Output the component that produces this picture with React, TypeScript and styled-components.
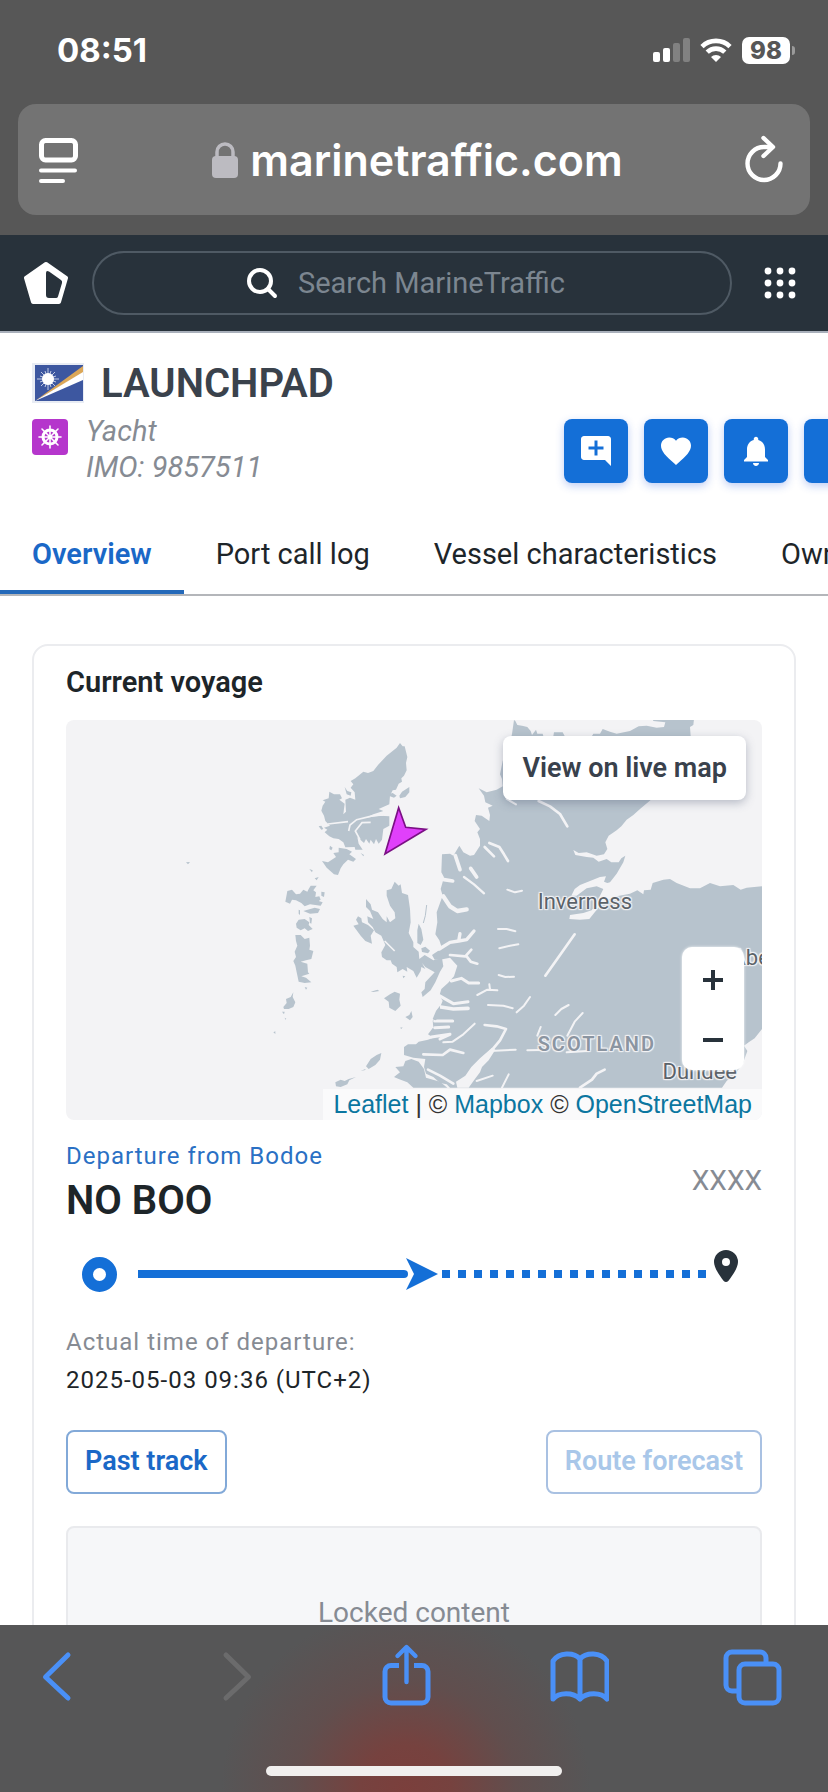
import React from "react";
import styled, { createGlobalStyle } from "styled-components";

const GlobalStyle = createGlobalStyle`
  *, *::before, *::after { box-sizing: border-box; }
  body { margin: 0; background: #fff; font-family: Roboto, "Liberation Sans", sans-serif; color: #1d2529; }
  button, input { font: inherit; color: inherit; }
  button { cursor: pointer; padding: 0; border: 0; background: none; }
  h1, h2, p { margin: 0; }
  a { color: inherit; text-decoration: none; }
  svg { display: block; flex: none; }
`;

const Screen = styled.div`
  display: flex;
  flex-direction: column;
  height: 100vh;
  overflow: hidden;
`;

/* ---------- browser chrome ---------- */

const BrowserTop = styled.header`
  flex: none;
  background: #575757;
  padding: 0 18px 20px;
  color: #fff;
`;

const StatusBar = styled.div`
  display: flex;
  align-items: center;
  justify-content: space-between;
  height: 104px;
  padding: 0 16px 4px 39px;
  font-family: Inter, sans-serif;
`;

const Clock = styled.time`
  font-size: 33px;
  font-weight: 700;
`;

const StatusIcons = styled.div`
  display: flex;
  align-items: center;
  gap: 10px;
`;

const Battery = styled.div`
  position: relative;
  width: 48px;
  height: 27px;
  margin-right: 4px;
  border-radius: 7px;
  background: #fff;
  color: #575757;
  font-size: 24px;
  font-weight: 800;
  line-height: 27px;
  text-align: center;

  &::after {
    content: "";
    position: absolute;
    top: 9px;
    right: -5px;
    width: 3px;
    height: 9px;
    border-radius: 0 3px 3px 0;
    background: #9a9a9a;
  }
`;

const AddressBar = styled.div`
  display: flex;
  align-items: center;
  justify-content: space-between;
  height: 111px;
  padding: 0 25px 0 18px;
  border-radius: 18px;
  background: #737373;
`;

const Address = styled.button`
  display: flex;
  align-items: center;
  gap: 12px;
  margin-left: 10px;
  font-family: Inter, sans-serif;
  font-size: 43px;
  font-weight: 600;
`;

/* ---------- site header ---------- */

const SiteHeader = styled.header`
  flex: none;
  display: flex;
  align-items: center;
  gap: 24px;
  height: 98px;
  padding: 0 32px 0 24px;
  background: #28323b;
  border-bottom: 2px solid #a9b0bb;
  color: #fff;
`;

const SearchBox = styled.label`
  flex: 1;
  min-width: 0;
  display: flex;
  align-items: center;
  justify-content: center;
  gap: 20px;
  height: 64px;
  border: 2px solid #4f5a64;
  border-radius: 32px;
`;

const SearchInput = styled.input`
  width: 280px;
  padding: 0;
  border: 0;
  outline: 0;
  background: transparent;
  font-size: 29px;
  line-height: 36px;
  &::placeholder { color: #7c8690; opacity: 1; }
`;

const MenuButton = styled.button`
  width: 32px;
  margin-left: 8px;
`;

/* ---------- vessel heading ---------- */

const Page = styled.main`
  flex: 1;
  min-height: 0;
  overflow: hidden;
`;

const VesselHeading = styled.section`
  padding: 28px 0 0 32px;
`;

const NameRow = styled.div`
  display: flex;
  align-items: center;
  gap: 17px;
  height: 44px;
`;

const VesselName = styled.h1`
  padding-top: 2px;
  font-size: 40px;
  line-height: 44px;
  font-weight: 600;
  color: #3a424c;
`;

const DetailRow = styled.div`
  display: flex;
  align-items: flex-start;
  justify-content: space-between;
  padding-top: 14px;
`;

const VesselType = styled.div`
  display: flex;
  gap: 18px;
`;

const TypeBadge = styled.span`
  display: grid;
  place-items: center;
  width: 36px;
  height: 36px;
  border-radius: 4px;
  background: #b536cc;
`;

const TypeText = styled.p`
  margin-top: -6px;
  font-size: 29px;
  line-height: 36px;
  font-style: italic;
  color: #868b93;
`;

const Actions = styled.div`
  flex: none;
  display: flex;
  gap: 16px;
  margin-right: -40px;
`;

const ActionButton = styled.button`
  display: grid;
  place-items: center;
  width: 64px;
  height: 64px;
  border-radius: 8px;
  background: #146fd7;
  box-shadow: 0 3px 8px rgba(40, 90, 220, 0.3);
`;

const Tabs = styled.nav`
  display: flex;
  margin-top: 35px;
  border-bottom: 2px solid #b4b6ba;
  overflow: hidden;
`;

const Tab = styled.a<{ $active?: boolean }>`
  flex: none;
  height: 74px;
  padding: 0 32px;
  border-bottom: 4px solid ${(p) => (p.$active ? "#2469b9" : "transparent")};
  font-size: 29px;
  line-height: 68px;
  font-weight: ${(p) => (p.$active ? 600 : 400)};
  color: ${(p) => (p.$active ? "#1a68c7" : "#1d2529")};
`;

/* ---------- voyage card ---------- */

const Card = styled.section`
  margin: 48px 32px 0;
  padding: 16px 32px 32px;
  border: 2px solid #ebecef;
  border-radius: 16px;
`;

const CardTitle = styled.h2`
  font-size: 29px;
  line-height: 40px;
  font-weight: 600;
`;

const MapFrame = styled.div`
  position: relative;
  height: 400px;
  margin-top: 18px;
  overflow: hidden;
  border-radius: 8px;
  background: #f3f3f5;
`;

const MapDrawing = styled.svg`
  width: 100%;
  height: 100%;
`;

const Place = styled.span<{ $right: number; $top: number; $region?: boolean }>`
  position: absolute;
  right: ${(p) => p.$right}px;
  top: ${(p) => p.$top}px;
  font-size: ${(p) => (p.$region ? 20 : 22)}px;
  line-height: 28px;
  font-weight: ${(p) => (p.$region ? 600 : 400)};
  letter-spacing: ${(p) => (p.$region ? 2 : 0)}px;
  color: ${(p) => (p.$region ? "#8b95a1" : "#5b6269")};
  text-shadow: 0 0 2px #f3f3f5, 1px 1px 1px #f3f3f5, -1px -1px 1px #f3f3f5, 1px -1px 1px #f3f3f5, -1px 1px 1px #f3f3f5;
`;

const LiveMapLink = styled.a`
  position: absolute;
  top: 16px;
  right: 16px;
  padding: 0 19px;
  border-radius: 8px;
  background: #fff;
  box-shadow: 0 3px 10px rgba(70, 80, 110, 0.35);
  font-size: 27px;
  line-height: 64px;
  font-weight: 600;
  color: #39414c;
`;

const ZoomControl = styled.div`
  position: absolute;
  right: 18px;
  bottom: 50px;
  width: 62px;
  padding-top: 3px;
  border-radius: 10px;
  background: #fff;
  box-shadow: 0 0 3px rgba(255, 255, 255, 0.9);
`;

const ZoomButton = styled.button`
  display: grid;
  place-items: center;
  width: 100%;
  height: 60px;
`;

const Attribution = styled.div`
  position: absolute;
  right: 0;
  bottom: 0;
  padding: 0 10px;
  background: #fafafb;
  font-family: "Liberation Sans", Arial, sans-serif;
  font-size: 25px;
  line-height: 31px;
  color: #333;
  a { color: #0b76a0; }
`;

const Ports = styled.div`
  display: flex;
  align-items: center;
  justify-content: space-between;
  margin-top: 20px;
`;

const PortName = styled.p<{ $locked?: boolean }>`
  padding-bottom: ${(p) => (p.$locked ? 4 : 0)}px;
  font-size: ${(p) => (p.$locked ? 28 : 40)}px;
  line-height: 48px;
  font-weight: ${(p) => (p.$locked ? 400 : 600)};
  color: ${(p) => (p.$locked ? "#868b93" : "#1d2529")};
`;

const Caption = styled.p<{ $tone?: "blue" | "grey" }>`
  font-size: 24px;
  line-height: 38px;
  letter-spacing: 1px;
  color: ${(p) => (p.$tone === "blue" ? "#2a70c4" : p.$tone === "grey" ? "#868b93" : "#1d2529")};
`;

const PortCaption = styled(Caption)`
  margin-bottom: 5px;
  line-height: 32px;
`;

const Progress = styled.div`
  display: flex;
  align-items: center;
  height: 48px;
  margin-top: 25px;
  padding: 0 24px 0 16px;
`;

const Sailed = styled.div`
  flex: 45;
  height: 8px;
  margin: 0 -2px 0 21px;
  border-radius: 0 4px 4px 0;
  background: #146fd7;
`;

const Remaining = styled.div`
  flex: 44;
  height: 8px;
  margin: 0 8px 0 4px;
  background: repeating-linear-gradient(90deg, #146fd7 0 8px, transparent 8px 16px);
`;

const PinMark = styled.div`
  padding-bottom: 16px;
`;

const Times = styled.div`
  margin-top: 25px;
`;

const TrackButtons = styled.div`
  display: flex;
  justify-content: space-between;
  margin-top: 31px;
`;

const OutlineButton = styled.button`
  height: 64px;
  padding: 0 17px 2px;
  border: 2px solid #82a9d8;
  border-radius: 8px;
  font-size: 27px;
  font-weight: 600;
  color: #1a68c7;
  &:disabled { border-color: #a9c1e2; color: #a9c7e9; }
`;

const LockedBox = styled.div`
  margin-top: 32px;
  padding: 65px 0;
  border: 2px solid #e9eaed;
  border-radius: 8px;
  background: #f6f7f9;
  text-align: center;
  font-size: 28px;
  line-height: 40px;
  color: #868b93;
`;

/* ---------- bottom toolbar ---------- */

const BrowserBottom = styled.footer`
  flex: none;
  height: 167px;
  background: radial-gradient(circle 185px at 49% 100%, #7b3f3c 0, #76423f 25%, rgba(100, 76, 75, 0.75) 60%, rgba(86, 86, 87, 0) 100%), #565657;
`;

const Toolbar = styled.nav`
  display: flex;
  justify-content: space-between;
  padding: 18px 45px 0 27px;
`;

const HomeBar = styled.div`
  width: 296px;
  height: 10px;
  margin: 59px auto 0;
  border-radius: 5px;
  background: #f1efee;
`;

const ToolIcon = ({ color = "#4a90f7", children }: { color?: string; children: React.ReactNode }) => (
  <svg width="60" height="64" viewBox="0 0 60 64" fill="none" stroke={color} strokeWidth="5" strokeLinecap="round" strokeLinejoin="round">
    {children}
  </svg>
);

/* ---------- drawings ---------- */

const LAND = "#b7c3cd";
const SEA = "#f3f3f5";

const Flag = () => (
  <svg width="52" height="40" viewBox="0 0 52 40">
    <rect width="52" height="40" fill="#e8ecf4" />
    <rect x="3" y="2" width="48" height="36" fill="#3d57a0" />
    <path d="M3 38 51 3v7z" fill="#dba758" />
    <path d="M3 38 51 9v8z" fill="#fff" />
    <g stroke="#fff" strokeWidth=".7">
      <path d="M16 5v22M5 16h22M9 9l14 14M23 9 9 23M13 8l6 16M19 8l-6 16M8 13l16 6M8 19l16-6" />
    </g>
    <circle cx="16" cy="16" r="6" fill="#fff" />
  </svg>
);

const Wheel = () => (
  <svg width="24" height="24" viewBox="0 0 24 24" fill="none" stroke="#fff">
    <circle cx="12" cy="12" r="7" strokeWidth="3" />
    <path d="M12 1v22M1 12h22M4 4l16 16M20 4 4 20" strokeWidth="1.6" strokeLinecap="round" />
    <circle cx="12" cy="12" r="2" fill="#fff" stroke="none" />
  </svg>
);

const VoyageMap = () => (
  <MapDrawing viewBox="0 0 2088 1200" preserveAspectRatio="xMaxYMin slice" role="img" aria-label="Map of Scotland with the vessel position">
    <g transform="translate(1002 -63)">
      <path
        fill={LAND}
        d="M342 63 346 66 352 78 366 80 382 84 392 96 396 108 408 92 412 104 428 104 430 111 460 111 462 100 488 100 494 111 576 111 580 104 600 104 608 90 630 98 650 104 690 96 716 82 740 80 770 86 792 84 796 70 760 66 758 60 882 60 880 78 870 84 872 111 840 180 752 303 720 330 700 348 680 362 664 382 650 394 626 410 616 430 622 450 612 466 590 470 560 460 536 462 520 453 526 468 560 474 580 476 596 488 620 480 634 490 656 490 664 478 676 470 670 490 650 524 630 550 622 552 612 548 618 532 600 534 570 546 540 558 524 570 514 590 530 590 560 568 590 562 610 570 600 590 590 612 575 634 550 642 510 648 508 660 540 662 568 660 580 645 600 620 620 604 650 592 690 584 712 574 730 586 732 574 752 572 758 552 790 542 810 540 830 552 870 568 900 568 930 552 960 562 1000 558 1022 572 1040 566 1086 562 1086 990 1064 1018 1046 1030 1032 1040 1042 1056 1030 1090 1010 1120 980 1146 966 1166 150 1166 140 1156 120 1152 100 1134 78 1124 72 1104 76 1080 40 1076 12 1068 12 1044 24 1036 48 1036 56 1028 84 1022 100 1016 84 1006 100 985 98 965 106 955 110 935 122 920 128 905 118 890 124 870 144 852 162 832 172 800 150 776 120 782 104 782 96 768 126 748 118 724 106 706 112 670 110 640 120 612 128 590 122 570 132 535 124 520 126 466 150 464 160 470 178 440 190 460 210 470 222 468 240 440 240 420 232 400 240 390 224 366 228 348 245 350 268 366 270 348 264 326 278 320 256 310 252 290 236 268 260 280 290 272 308 262 306 240 300 226 308 186 330 130 336 105z"
      />
      <g fill="none" stroke={SEA} strokeLinecap="round" strokeLinejoin="round" strokeWidth="6">
        <path d="M416 306 450 322 480 345 502 382" strokeWidth="8" />
        <path d="M320 300 348 316" />
        <path d="M254 444 282 472M268 432 298 444 312 466 324 486" strokeWidth="8" />
        <path d="M166 470 180 512M212 508 230 534M132 542 158 546" strokeWidth="11" />
        <path d="M192 534 222 556 252 583" strokeWidth="7" />
        <path d="M322 572 345 580 366 575M294 690 320 690 346 697M298 748 330 740 355 736M296 828 316 834 342 833" />
        <path d="M130 592 150 622 172 636 200 631" strokeWidth="13" />
        <path d="M118 750 150 730 176 726 180 704M176 726 200 722 222 696" strokeWidth="10" />
        <path d="M150 768 196 772 214 752M200 772 212 788 232 794" strokeWidth="8" />
        <path d="M154 846 184 838 206 852 236 852M118 890 160 914 204 908" strokeWidth="9" />
        <path d="M122 924 160 930 204 928" strokeWidth="11" />
        <path d="M104 966 158 966M104 986 146 984M94 1014 150 1006 120 1020" strokeWidth="9" />
        <path d="M232 888 262 872 292 874M268 856 270 872M264 918 310 920 338 928" />
        <path d="M350 940 372 920 390 894M466 948 484 930 506 918M502 1010 524 968 548 942M412 1010 422 984" />
        <path d="M436 830 470 782 524 706" strokeWidth="8" />
        <path d="M130 1030 158 1028 190 1006 224 974" />
        <path d="M254 978 290 982 318 990 300 1024 270 1060" strokeWidth="8" />
        <path d="M270 1056 347 1052M382 1054 424 1053M500 1060 562 1056M230 1146 278 1130M306 1166 326 1126" />
        <path d="M540 1166 576 1142 590 1124 614 1112" strokeWidth="8" />
        <path d="M70 1066 128 1068 150 1052 190 1062M84 1112 120 1130 160 1154" strokeWidth="8" />
      </g>
      <path d="M276 1046 240 1078 214 1104 196 1130 168 1148 172 1166 206 1166 222 1144 240 1120 246 1104 266 1084 286 1052z" fill={SEA} />
    </g>
    <g fill={LAND} transform="translate(-198 -273)">
      <path d="M1200 342 1208 352 1214 352 1222 384 1218 402 1220 424 1212 440 1204 448 1206 458 1196 464 1188 482 1178 484 1170 500 1168 526 1136 540 1150 546 1120 556 1098 566 1140 560 1168 562 1168 590 1150 600 1146 632 1136 644 1128 630 1122 646 1112 632 1108 644 1098 630 1092 642 1072 624 1076 644 1088 662 1066 662 1064 654 1036 655 1030 640 1016 630 1000 628 988 622 974 610 982 602 972 596 990 590 976 576 972 560 964 545 968 530 976 518 968 514 986 508 988 488 1002 496 1020 496 1026 508 1018 512 1034 524 1030 556 1038 548 1036 512 1050 506 1066 512 1064 490 1052 476 1060 466 1052 456 1066 448 1090 428 1104 432 1120 426 1134 408 1160 380 1190 356z" />
      <path d="M966 696 984 700 1008 684 1000 672 1016 670 1016 656 1040 660 1056 668 1048 676 1068 690 1060 698 1044 692 1030 706 1022 718 1014 738 1002 736 980 716zM1198 500 1206 488 1228 474 1228 490 1216 504 1200 508zM1170 494l8-2 12 8-8 6-12-4zM956 592l8-2 6 10-6 2zM990 650l8 6-4 8-6-4zM1034 474l8 12 12 4-2 10-12-4zM1082 672l10 6-2 4zM928 720l10 4-2 6zM944 748l12-4-6 10zM558 700l12-1-6 7z" />
      <path d="M856 818 862 786 876 782 888 796 900 794 910 782 922 788 926 780 932 770 950 770 940 784 948 790 946 804 958 802 962 812 956 816 968 820 962 830 930 826 914 832 904 822 888 814 876 812 870 824zM910 846 944 836 960 840 954 852 930 854zM964 788l10 2-2 14-8-4zM888 884 896 872 914 870 928 880 926 888 938 900 924 906 914 898 902 904 890 896zM928 864l8 4-2 16-4-2zM896 842l4 2 0 14-4-4z" />
      <path d="M886 918 902 918 914 930 928 926 930 950 928 962 940 966 934 990 918 994 902 998 922 1004 924 1030 928 1034 904 1042 918 1046 934 1060 914 1062 896 1058 890 1030 886 1010 880 996 888 984 884 968 892 950 888 936zM850 1134 860 1122 858 1110 872 1104 880 1090 878 1104 886 1120 880 1134 866 1140 852 1140zM914 1074l8 2-4 6zM846 1148l8 0-2 8zM820 1210l6-3 0 8zM854 1166l5 3-3 3z" />
      <path d="M1184 758 1196 770 1202 766 1206 792 1224 798 1230 840 1232 880 1226 912 1240 940 1240 954 1256 968 1258 990 1274 978 1300 994 1326 988 1330 1012 1320 1028 1306 1060 1292 1084 1268 1104 1264 1090 1274 1080 1276 1060 1304 1030 1276 1014 1266 1002 1276 1020 1264 1014 1262 1026 1250 1046 1240 1026 1220 1014 1222 1028 1208 1020 1192 1030 1190 1014 1176 1004 1172 994 1160 994 1146 984 1144 970 1156 948 1144 920 1126 910 1118 894 1104 880 1102 862 1120 870 1110 846 1098 834 1098 810 1112 826 1116 842 1134 850 1148 870 1160 880 1160 862 1170 880 1186 868 1184 850 1170 830 1160 800 1160 784 1174 780z" />
      <path d="M1060 890 1076 886 1068 872 1074 862 1084 868 1086 880 1104 888 1122 904 1112 920 1116 944 1096 936 1082 920zM1256 884 1264 900 1270 932 1262 948 1252 942 1252 904zM1264 958l12-5 14 12-6 8-18-4zM1152 1108 1170 1096 1184 1088 1200 1094 1198 1112 1202 1130 1186 1146 1168 1136 1166 1118zM1216 1164 1228 1158 1234 1146 1238 1164 1230 1174zM1208 1040l8 2-6 6zM1200 1196l8-1-4 5zM1112 1086l8 0 12-4 6 4-18 3zM1298 1170 1308 1146 1320 1130 1320 1164 1306 1174z" />
      <path d="M1144 1272 1140 1292 1126 1308 1106 1320 1098 1312 1112 1290 1130 1278zM1006 1360 1022 1352 1034 1356 1046 1350 1068 1344 1048 1354 1042 1366 1022 1374 1008 1372zM1082 1326l14-6 0 3zM1186 1314 1210 1312 1216 1296 1234 1290 1256 1298 1272 1320 1278 1346 1320 1358 1342 1376 1240 1376 1222 1360 1196 1350 1182 1344 1200 1330z" />
      <path d="M1280 828 1276 860 1270 882" fill="none" stroke={LAND} strokeWidth="3" />
      <path d="M984 585 1044 578M1046 606 1050 588 1070 572 1120 560 1150 558M1112 580 1086 581 1066 606 1080 632M1154 936 1184 966" fill="none" stroke={SEA} strokeWidth="5" />
      <path d="M1196 536 1217 595 1278 601 1155 675z" fill="#e040fb" stroke="#7b1085" strokeWidth="5" />
    </g>
  </MapDrawing>
);

export default function App() {
  return (
    <Screen>
      <GlobalStyle />
      <BrowserTop>
        <StatusBar>
          <Clock>08:51</Clock>
          <StatusIcons>
            <svg width="37" height="24" viewBox="0 0 37 24" fill="#fff">
              <rect y="14" width="7" height="10" rx="2" />
              <rect x="10" y="10" width="7" height="14" rx="2" />
              <rect x="20" y="5" width="7" height="19" rx="2" opacity=".25" />
              <rect x="30" width="7" height="24" rx="2" opacity=".25" />
            </svg>
            <svg width="32" height="24" viewBox="0 0 32 24" fill="none" stroke="#fff" strokeWidth="4.6">
              <path d="M2 8.6a20 20 0 0 1 28 0" />
              <path d="M7.2 14.2a12.6 12.6 0 0 1 17.6 0" />
              <path d="M16 24l-5-5a7 7 0 0 1 10 0z" fill="#fff" stroke="none" />
            </svg>
            <Battery>98</Battery>
          </StatusIcons>
        </StatusBar>
        <AddressBar>
          <button aria-label="Page settings">
            <svg width="46" height="46" viewBox="0 -1 46 46" fill="none" stroke="#fff" strokeLinecap="round">
              <rect x="5.5" y="2.5" width="34" height="19.5" rx="4" strokeWidth="5" />
              <path d="M5 32.500h34M5 43h22" strokeWidth="4" />
            </svg>
          </button>
          <Address>
            <svg width="26" height="36" viewBox="0 0 26 36">
              <path d="M5 16V10a8 8 0 0 1 16 0v6" fill="none" stroke="#bcbbc1" strokeWidth="3.5" />
              <rect y="14" width="26" height="22" rx="4" fill="#bcbbc1" />
            </svg>
            marinetraffic.com
          </Address>
          <button aria-label="Reload">
            <svg width="42" height="50" viewBox="0 0 42 50" fill="none" stroke="#fff" strokeWidth="4.4" strokeLinecap="round" strokeLinejoin="round">
              <path d="M37.500 28.500A16.500 16.500 0 1 1 21 12H28" />
              <path d="M20.500 3 30 12 20.500 21" />
            </svg>
          </button>
        </AddressBar>
      </BrowserTop>

      <SiteHeader>
        <a href="#home" aria-label="Home">
          <svg width="44" height="44" viewBox="0 0 44 44">
            <path d="M22 3 42 17 35 41H9L2 17z" fill="#fff" stroke="#fff" strokeWidth="4" strokeLinejoin="round" />
            <path d="M22 12q0-3 3-1.500L37 19q1.500 1 1 3L34 35.500q-.5 1.500-2 1.500h-7q-3 0-3-3z" fill="#28323b" />
          </svg>
        </a>
        <SearchBox>
          <svg width="32" height="32" viewBox="0 0 32 32" fill="none" stroke="#fff" strokeWidth="4" strokeLinecap="round">
            <circle cx="14" cy="14" r="11" />
            <path d="M22 22 29 29" />
          </svg>
          <SearchInput type="text" placeholder="Search MarineTraffic" aria-label="Search MarineTraffic" />
        </SearchBox>
        <MenuButton aria-label="Apps">
          <svg width="32" height="32" viewBox="0 0 32 32" fill="#fff">
            {[4, 16, 28].map((y) => [4, 16, 28].map((x) => <circle key={`${x}-${y}`} cx={x} cy={y} r="3.4" />))}
          </svg>
        </MenuButton>
      </SiteHeader>

      <Page>
        <VesselHeading>
          <NameRow>
            <Flag />
            <VesselName>LAUNCHPAD</VesselName>
          </NameRow>
          <DetailRow>
            <VesselType>
              <TypeBadge>
                <Wheel />
              </TypeBadge>
              <TypeText>
                Yacht
                <br />
                IMO: 9857511
              </TypeText>
            </VesselType>
            <Actions>
              <ActionButton aria-label="Add note">
                <svg width="36" height="36" viewBox="0 0 24 24" fill="#fff">
                  <path d="M22 4c0-1.100-.9-2-2-2H4c-1.100 0-2 .9-2 2v12c0 1.100.9 2 2 2h14l4 4zm-5 7h-4v4h-2v-4H7V9h4V5h2v4h4z" />
                </svg>
              </ActionButton>
              <ActionButton aria-label="Add to favourites">
                <svg width="36" height="36" viewBox="0 0 24 24" fill="#fff">
                  <path d="m12 21.350-1.450-1.320C5.400 15.360 2 12.280 2 8.500 2 5.420 4.420 3 7.500 3c1.740 0 3.410.81 4.500 2.090C13.090 3.810 14.760 3 16.500 3 19.580 3 22 5.420 22 8.500c0 3.780-3.400 6.860-8.550 11.540z" />
                </svg>
              </ActionButton>
              <ActionButton aria-label="Notifications">
                <svg width="36" height="36" viewBox="0 0 24 24" fill="#fff">
                  <path d="M12 22c1.100 0 2-.9 2-2h-4c0 1.100.89 2 2 2m6-6v-5c0-3.070-1.640-5.640-4.500-6.320V4c0-.83-.67-1.500-1.500-1.500s-1.500.67-1.500 1.500v.68C7.630 5.360 6 7.920 6 11v5l-2 2v1h16v-1z" />
                </svg>
              </ActionButton>
              <ActionButton aria-label="More actions" />
            </Actions>
          </DetailRow>
        </VesselHeading>

        <Tabs>
          <Tab href="#overview" $active>Overview</Tab>
          <Tab href="#ports">Port call log</Tab>
          <Tab href="#vessel">Vessel characteristics</Tab>
          <Tab href="#ownership">Ownership</Tab>
        </Tabs>

        <Card>
          <CardTitle>Current voyage</CardTitle>
          <MapFrame>
            <VoyageMap />
            <Place $right={130} $top={168}>Inverness</Place>
            <Place $right={-63} $top={224}>Aberdeen</Place>
            <Place $right={106} $top={310} $region>SCOTLAND</Place>
            <Place $right={25} $top={338}>Dundee</Place>
            <LiveMapLink href="#map">View on live map</LiveMapLink>
            <ZoomControl>
              <ZoomButton aria-label="Zoom in">
                <svg width="20" height="20" viewBox="0 0 20 20" fill="#28323b"><path d="M8 0h4v8h8v4h-8v8H8v-8H0V8h8z" /></svg>
              </ZoomButton>
              <ZoomButton aria-label="Zoom out">
                <svg width="20" height="20" viewBox="0 0 20 20" fill="#28323b"><path d="M0 8h20v4H0z" /></svg>
              </ZoomButton>
            </ZoomControl>
            <Attribution>
              <a href="#leaflet">Leaflet</a> | © <a href="#mapbox">Mapbox</a> © <a href="#osm">OpenStreetMap</a>
            </Attribution>
          </MapFrame>

          <Ports>
            <div>
              <PortCaption $tone="blue">Departure from Bodoe</PortCaption>
              <PortName>NO BOO</PortName>
            </div>
            <PortName $locked>XXXX</PortName>
          </Ports>

          <Progress>
            <svg width="35" height="35" viewBox="0 0 35 35" fill="none" stroke="#146fd7" strokeWidth="11">
              <circle cx="17.5" cy="17.5" r="12" />
            </svg>
            <Sailed />
            <svg width="32" height="32" viewBox="0 0 32 32" fill="#146fd7"><path d="M0 0 32 16 0 32 8 16z" /></svg>
            <Remaining />
            <PinMark>
              <svg width="24" height="32" viewBox="0 0 24 32" fill="#28323b">
                <path fillRule="evenodd" d="M12 0a12 12 0 0 1 12 12c0 6-6 14-9.500 18.800q-2.500 2.400-5 0C6 26 0 18 0 12A12 12 0 0 1 12 0m0 8a4 4 0 1 0 0 8 4 4 0 0 0 0-8" />
              </svg>
            </PinMark>
          </Progress>

          <Times>
            <Caption $tone="grey">Actual time of departure:</Caption>
            <Caption>2025-05-03 09:36 (UTC+2)</Caption>
          </Times>

          <TrackButtons>
            <OutlineButton>Past track</OutlineButton>
            <OutlineButton disabled>Route forecast</OutlineButton>
          </TrackButtons>

          <LockedBox>Locked content</LockedBox>
        </Card>
      </Page>

      <BrowserBottom>
        <Toolbar>
          <button aria-label="Back">
            <ToolIcon><path d="M41 12 18.500 34 41 55" /></ToolIcon>
          </button>
          <button aria-label="Forward" disabled>
            <ToolIcon color="#6b6b6c"><path d="M25 12 47.500 34 25 55" /></ToolIcon>
          </button>
          <button aria-label="Share">
            <ToolIcon>
              <path d="M24 22.500h-8a6 6 0 0 0-6 6V54a6 6 0 0 0 6 6h31a6 6 0 0 0 6-6V28.500a6 6 0 0 0-6-6h-8" strokeLinecap="butt" />
              <path d="M31.500 39V5M22.500 13l9-9 9 9" strokeWidth="4.4" />
            </ToolIcon>
          </button>
          <button aria-label="Bookmarks">
            <ToolIcon>
              <path d="M31 16v40M31 16C25 9 10 9 4 18v38C10 49 24 49 31 56 38 49 52 49 58 56V18C52 9 37 9 31 16z" />
            </ToolIcon>
          </button>
          <button aria-label="Tabs">
            <ToolIcon>
              <rect x="16" y="21" width="40" height="39" rx="6" />
              <path d="M14 48H9a6 6 0 0 1-6-6V15a6 6 0 0 1 6-6h28a6 6 0 0 1 6 6v5" strokeLinecap="butt" />
            </ToolIcon>
          </button>
        </Toolbar>
        <HomeBar />
      </BrowserBottom>
    </Screen>
  );
}
